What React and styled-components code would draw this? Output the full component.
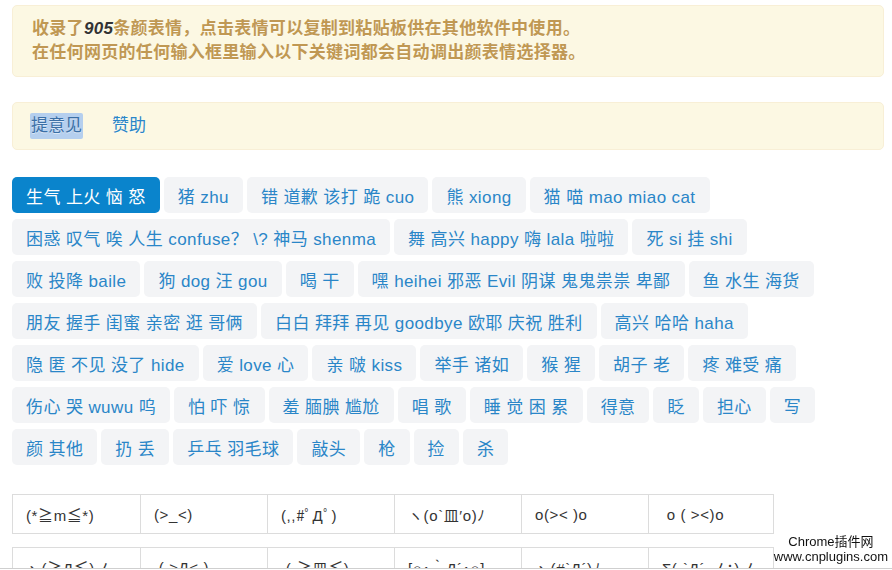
import React from "react";
import styled, { createGlobalStyle } from "styled-components";

const Global = createGlobalStyle`
  html, body { margin: 0; padding: 0; background: #fff; }
  body {
    font-family: "Liberation Sans", "Noto Sans CJK SC", sans-serif;
    overflow: hidden;
  }
`;

const Page = styled.div`
  width: 872px;
  padding: 5px 0 0 12px;
  display: flex;
  flex-direction: column;
`;

const Alert = styled.div`
  box-sizing: border-box;
  background: #fcf8e3;
  border: 1px solid #f8efd6;
  border-radius: 5px;
  color: #c09853;
  text-shadow: 0 1px 0 rgba(255, 255, 255, 0.5);
  font-size: 17px;
  line-height: 24px;
  letter-spacing: 0.3px;
  padding: ${(p) => p.$pad || "11px 19px"};
  margin-bottom: ${(p) => p.$mb || "0"};
`;

const Line = styled.div`
  font-weight: bold;
`;

const Count = styled.b`
  color: #333;
  font-style: italic;
`;

const LinkBar = styled.div`
  display: flex;
  align-items: center;
  gap: 28px;
  height: 24px;
  letter-spacing: 0;
`;

const Link = styled.a`
  color: #2a86c8;
  text-decoration: none;
  padding: 1px 1px;
  border-radius: 2px;
  background: ${(p) => (p.$selected ? "#b5cfee" : "transparent")};
  ${(p) => p.$selected && "color: #3a6fa6;"}
`;

const PillRows = styled.div`
  display: flex;
  flex-direction: column;
  gap: 6px;
  margin-top: 27px;
`;

const PillRow = styled.div`
  display: flex;
  gap: 4px;
`;

const Pill = styled.a`
  display: inline-flex;
  align-items: center;
  height: 36px;
  padding: 0 14px;
  border-radius: 5px;
  font-size: 17px;
  letter-spacing: 0.4px;
  white-space: pre;
  text-decoration: none;
  background: ${(p) => (p.$active ? "#0a84cc" : "#f3f4f6")};
  color: ${(p) => (p.$active ? "#fff" : "#2a86c8")};
`;

const Grid = styled.div`
  display: flex;
  flex-direction: column;
  gap: 13px;
  margin-top: 29px;
`;

const KRow = styled.div`
  display: grid;
  grid-template-columns: repeat(6, 127px);
  width: 762px;
  box-sizing: border-box;
  border: 1px solid #dcdcdc;
  height: 40px;
`;

const KCell = styled.div`
  display: flex;
  align-items: center;
  padding-left: 13px;
  font-size: 15px;
  letter-spacing: 0.6px;
  color: #333;
  white-space: pre;
  border-left: ${(p) => (p.$first ? "none" : "1px solid #dcdcdc")};
`;

const Watermark = styled.div`
  position: fixed;
  right: 4px;
  bottom: 5px;
  background: #fff;
  text-align: center;
  font-family: "Liberation Sans", "Noto Sans CJK SC", sans-serif;
  font-size: 13px;
  line-height: 15px;
  color: #111;
  padding: 1px 0;
`;

const BottomEdge = styled.div`
  position: fixed;
  left: 0;
  right: 0;
  bottom: 0;
  height: 1px;
  background: #fff;
  border-top: 1px solid #cfcfcf;
`;

const pillRows = [
  ["生气 上火 恼 怒", "猪 zhu", "错 道歉 该打 跪 cuo", "熊 xiong", "猫 喵 mao miao cat"],
  ["困惑 叹气 唉 人生 confuse？ \\? 神马 shenma", "舞 高兴 happy 嗨 lala 啦啦", "死 si 挂 shi"],
  ["败 投降 baile", "狗 dog 汪 gou", "喝 干", "嘿 heihei 邪恶 Evil 阴谋 鬼鬼祟祟 卑鄙", "鱼 水生 海货"],
  ["朋友 握手 闺蜜 亲密 逛 哥俩", "白白 拜拜 再见 goodbye 欧耶 庆祝 胜利", "高兴 哈哈 haha"],
  ["隐 匿 不见 没了 hide", "爱 love 心", "亲 啵 kiss", "举手 诸如", "猴 猩", "胡子 老", "疼 难受 痛"],
  ["伤心 哭 wuwu 呜", "怕 吓 惊", "羞 腼腆 尴尬", "唱 歌", "睡 觉 困 累", "得意", "眨", "担心", "写"],
  ["颜 其他", "扔 丢", "乒乓 羽毛球", "敲头", "枪", "捡", "杀"],
];

const kaomoji = [
  ["(*≧m≦*)", "(>_<)", "(,,#ﾟДﾟ)", "ヽ(o`皿′o)ﾉ", "o(>< )o", " o ( ><)o"],
  ["ヽ(≧Д≦)ノ", " ( >Д< )", " (·≧皿≦)", "[○･｀Д´･○]", "ヽ(#`Д´)ﾉ", "Σ(-`Д´-ノ；)ノ"],
];

export default function App() {
  return (
    <>
      <Global />
      <Page>
        <Alert $mb="25px">
          <Line>
            收录了<Count>905</Count>条颜表情，点击表情可以复制到粘贴板供在其他软件中使用。
          </Line>
          <Line>在任何网页的任何输入框里输入以下关键词都会自动调出颜表情选择器。</Line>
        </Alert>
        <Alert $pad="11px 17px">
          <LinkBar>
            <Link $selected href="#">提意见</Link>
            <Link href="#">赞助</Link>
          </LinkBar>
        </Alert>
        <PillRows>
          {pillRows.map((row, i) => (
            <PillRow key={i}>
              {row.map((t, j) => (
                <Pill key={j} href="#" $active={i === 0 && j === 0}>
                  {t}
                </Pill>
              ))}
            </PillRow>
          ))}
        </PillRows>
        <Grid>
          {kaomoji.map((row, i) => (
            <KRow key={i}>
              {row.map((k, j) => (
                <KCell key={j} $first={j === 0}>
                  {k}
                </KCell>
              ))}
            </KRow>
          ))}
        </Grid>
      </Page>
      <Watermark>
        Chrome插件网
        <br />
        www.cnplugins.com
      </Watermark>
      <BottomEdge />
    </>
  );
}
